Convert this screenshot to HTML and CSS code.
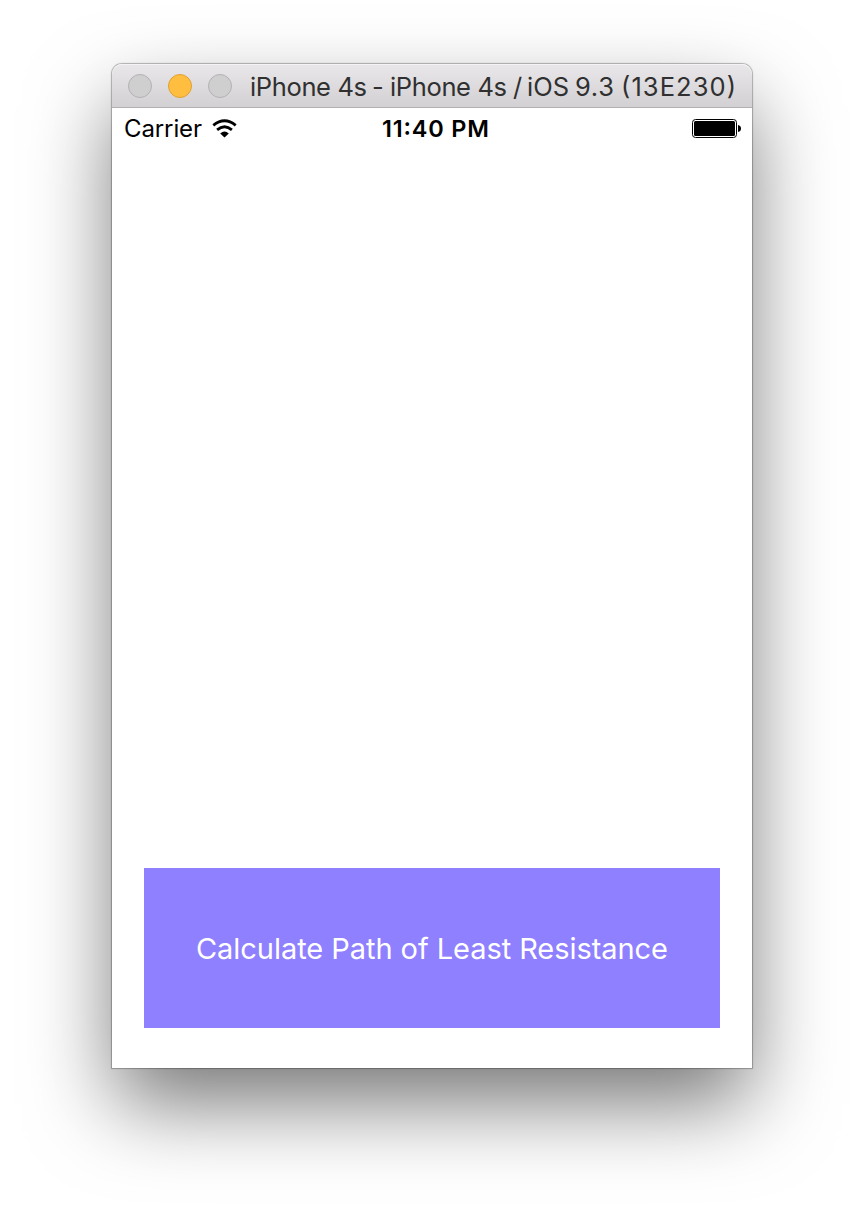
FILE: index.html
```html
<!DOCTYPE html>
<html lang="en">
<head>
<meta charset="utf-8">
<title>iPhone 4s</title>
<link rel="stylesheet" href="styles.css">
</head>
<body>
<main class="window">
  <header class="titlebar">
    <span class="light"></span>
    <span class="light light-minimize"></span>
    <span class="light"></span>
    <svg class="title" width="488" height="42"><text y="31"><tspan x="0" textLength="117">iPhone 4s</tspan><tspan x="122">-</tspan><tspan x="140" textLength="117">iPhone 4s</tspan><tspan x="263">/</tspan><tspan x="277" textLength="42">iOS</tspan><tspan x="325" textLength="39">9.3</tspan><tspan x="371" textLength="115">(13E230)</tspan></text></svg>
  </header>
  <section class="screen">
    <div class="status">
      <div class="carrier">
        <svg width="78" height="40"><text x="0" y="29" textLength="78">Carrier</text></svg>
        <svg class="wifi" width="26" height="20" viewBox="0 0 26 20"><g fill="none" stroke="#000" stroke-width="2.8"><path d="M1.3 6.3Q12.5-2.7 23.7 6.3"/><path d="M5.1 10.9Q12.5 4.6 19.9 10.9"/></g><path d="M8.2 14.4Q12.5 10.8 16.8 14.4L12.5 18.5Z"/></svg>
      </div>
      <svg class="time" width="110" height="40"><text x="1" y="29" textLength="107">11:40 PM</text></svg>
      <svg class="battery" width="50" height="20" viewBox="0 0 50 20"><rect x=".5" y=".5" width="44" height="18" rx="3" fill="none" stroke="#000"/><rect x="2" y="2" width="41" height="15" rx="1.5"/><path d="M46 6Q49 6.5 49 9.5T46 13Z"/></svg>
    </div>
    <button class="calculate"><svg width="474" height="48"><text x="1" y="35" textLength="472">Calculate Path of Least Resistance</text></svg></button>
  </section>
</main>
</body>
</html>
```
FILE: styles.css
```css
* { box-sizing: border-box; }
body { margin: 0; height: 1228px; padding: 64px 112px 160px; background: #fff; font-family: Inter, Roboto, sans-serif; overflow: hidden; }
svg { display: block; flex: none; }
.window { width: 640px; height: 1004px; display: flex; flex-direction: column; border-radius: 10px 10px 0 0; box-shadow: 0 0 1px 1px rgba(0,0,0,.28), 0 38px 84px -3px rgba(0,0,0,.54); }
.titlebar { height: 44px; display: flex; align-items: center; padding-left: 16px; border-radius: 10px 10px 0 0; border-bottom: 1px solid #b3afb3; background: linear-gradient(#e9e7e9, #d2d0d2); box-shadow: inset 0 1px #f5f3f5; }
.light { width: 24px; height: 24px; margin-right: 16px; border: 1px solid #b3b1b3; border-radius: 50%; background: #d0cfd0; }
.light-minimize { border-color: #e0a034; background: #ffbe40; }
.title { margin-left: 2px; font-size: 25.5px; fill: #303030; }
.screen { flex: 1; display: flex; flex-direction: column; justify-content: space-between; padding-bottom: 40px; background: #fff; }
.status { height: 40px; display: grid; grid-template-columns: 257px 1fr auto; padding: 0 10px 0 12px; font-size: 24px; }
.carrier { display: flex; }
.wifi { margin: 11px 0 0 10px; }
.time { font-size: 23.5px; font-weight: 600; }
.battery { margin: 11px 0 0; }
.calculate { width: 576px; height: 160px; align-self: center; display: grid; place-items: center; padding: 0; border: 0; background: #8f80ff; font: 29px Inter, sans-serif; fill: #fff; }
```
